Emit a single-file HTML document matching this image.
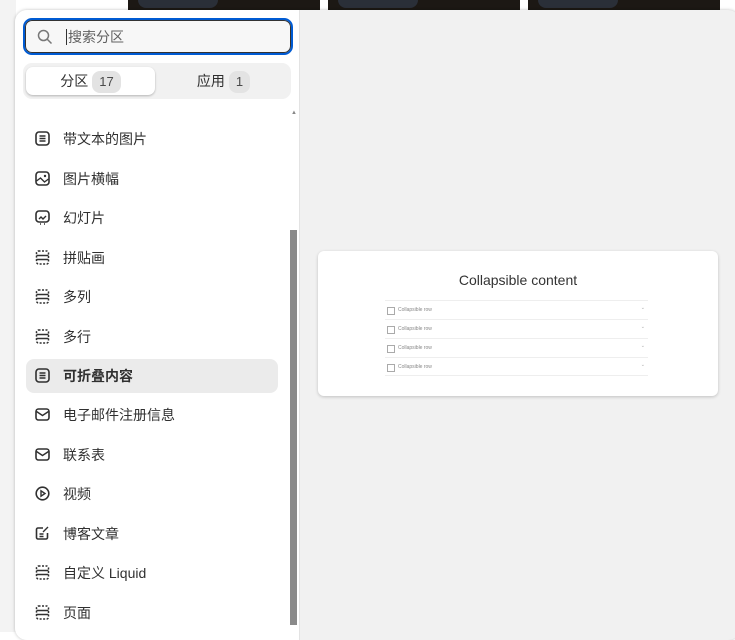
<!DOCTYPE html>
<html><head><meta charset="utf-8"><style>
*{margin:0;padding:0;box-sizing:border-box}
body{width:735px;height:632px;overflow:hidden;background:#fff;font-family:"Liberation Sans","Noto Sans CJK SC",sans-serif;position:relative}
.bgl{position:absolute;left:0;top:0;width:16px;height:632px;background:#f3f3f3}
.img{position:absolute;top:0;height:12px;background:#1c1814}
.img i{position:absolute;left:10px;top:0;width:80px;height:8px;border-radius:0 0 14px 14px;background:#2a2f38}
.pop{position:absolute;left:15px;top:10px;width:725px;height:630px;border-radius:12px;background:#f1f1f1;box-shadow:0 0 3px rgba(0,0,0,.25);overflow:hidden}
.left{position:absolute;left:0;top:0;width:285px;height:100%;background:#fff;border-right:1px solid #e3e3e3}
.search{position:absolute;left:8px;top:8px;width:270px;height:37px;border:2px solid #005bd3;border-radius:9px;background:#f7f7f7;box-shadow:inset 0 0 0 1px #333}
.search span{position:absolute;left:41px;top:9px;font-size:14px;color:#616161;border-left:1px solid #333;padding-left:1px;line-height:16px}
.tabs{position:absolute;left:8px;top:53px;width:268px;height:36px;background:#f1f1f1;border-radius:9px}
.tab{position:absolute;top:4px;height:28px;width:129px;border-radius:7px;font-size:14px;color:#303030;text-align:center;line-height:28px}
.tab b{display:inline-block;font-weight:normal;background:#e3e3e3;border-radius:8px;padding:0 7px;line-height:22px;margin-left:4px;color:#4a4a4a;font-size:13px}
.t1{left:3px;background:#fff;box-shadow:0 1px 2px rgba(0,0,0,.25)}
.t2{left:136px}
.it{position:absolute;left:11px;width:252px;height:34px;border-radius:8px;font-size:14px;color:#303030;line-height:34px;padding-left:37px}
.it svg{position:absolute;left:9px;top:9px}
.sel{background:#ebebeb;font-weight:bold}
.sb{position:absolute;left:275px;top:220px;width:7px;height:395px;background:#8a8a8a}
.card{position:absolute;left:303px;top:241px;width:400px;height:145px;background:#fff;border-radius:6px;box-shadow:0 1px 3px rgba(0,0,0,.2)}
.card h3{font-weight:normal;font-size:14px;color:#333;text-align:center;margin-top:21px}
.row{position:absolute;left:67px;width:263px;height:19px;border-top:1px solid #eee;font-size:5px;color:#888;line-height:19px;padding-left:13px}
.row:before{content:"";position:absolute;left:2px;top:6px;width:6px;height:6px;border:1px solid #aaa}
.row:after{content:"⌄";position:absolute;right:3px;top:-2px;color:#aaa}
</style></head><body>
<div class="bgl"></div>
<div class="img" style="left:128px;width:192px"><i></i></div>
<div class="img" style="left:328px;width:192px"><i></i></div>
<div class="img" style="left:528px;width:192px"><i></i></div>
<div class="pop">
<div class="left">
<div class="search"><svg style="position:absolute;left:12px;top:9px" width="16" height="16" viewBox="0 0 16 16"><circle cx="6.5" cy="6.5" r="5" fill="none" stroke="#777" stroke-width="1.5"/><path d="M10 10l4.5 4.5" stroke="#777" stroke-width="1.5"/></svg><span>搜索分区</span></div>
<div class="tabs"><div class="tab t1">分区<b>17</b></div><div class="tab t2">应用<b>1</b></div></div>
<div style="position:absolute;left:276px;top:100px;font-size:6px;color:#888">▲</div>
<div class="it" style="top:112px"><svg width="15" height="15" viewBox="0 0 15 15"><rect x="1" y="1" width="13" height="13" rx="3" fill="none" stroke="#303030" stroke-width="1.6"/><path d="M4.5 5h6M4.5 7.5h6M4.5 10h6" stroke="#303030" stroke-width="1.4"/></svg>带文本的图片</div>
<div class="it" style="top:152px"><svg width="15" height="15" viewBox="0 0 15 15"><rect x="1" y="1" width="13" height="13" rx="3" fill="none" stroke="#303030" stroke-width="1.6"/><path d="M1.5 10l4-3 4 4 4-3" fill="none" stroke="#303030" stroke-width="1.4"/><circle cx="10" cy="5" r="1.2" fill="#303030"/></svg>图片横幅</div>
<div class="it" style="top:191px"><svg width="15" height="15" viewBox="0 0 15 15"><rect x="1" y="1" width="13" height="11" rx="3" fill="none" stroke="#303030" stroke-width="1.6"/><path d="M4 9l2-2 2 2 3-3M5 14h1M9 14h1" fill="none" stroke="#303030" stroke-width="1.4"/></svg>幻灯片</div>
<div class="it" style="top:231px"><svg width="15" height="15" viewBox="0 0 15 15"><rect x="1.5" y="1" width="12" height="13" rx="2" fill="none" stroke="#303030" stroke-width="1.5" stroke-dasharray="2 1.5"/><path d="M1.5 5.5h12M1.5 9.5h12" stroke="#303030" stroke-width="1.4"/></svg>拼贴画</div>
<div class="it" style="top:270px"><svg width="15" height="15" viewBox="0 0 15 15"><rect x="1.5" y="1" width="12" height="13" rx="2" fill="none" stroke="#303030" stroke-width="1.5" stroke-dasharray="2 1.5"/><path d="M1.5 5.5h12M1.5 9.5h12" stroke="#303030" stroke-width="1.4"/></svg>多列</div>
<div class="it" style="top:310px"><svg width="15" height="15" viewBox="0 0 15 15"><rect x="1.5" y="1" width="12" height="13" rx="2" fill="none" stroke="#303030" stroke-width="1.5" stroke-dasharray="2 1.5"/><path d="M1.5 5.5h12M1.5 9.5h12" stroke="#303030" stroke-width="1.4"/></svg>多行</div>
<div class="it sel" style="top:349px"><svg width="15" height="15" viewBox="0 0 15 15"><rect x="1" y="1" width="13" height="13" rx="3" fill="none" stroke="#303030" stroke-width="1.6"/><path d="M4.5 5h6M4.5 7.5h6M4.5 10h6" stroke="#303030" stroke-width="1.4"/></svg>可折叠内容</div>
<div class="it" style="top:388px"><svg width="15" height="15" viewBox="0 0 15 15"><rect x="1" y="2" width="13" height="11" rx="2.5" fill="none" stroke="#303030" stroke-width="1.6"/><path d="M1.5 4.5l6 4 6-4" fill="none" stroke="#303030" stroke-width="1.4"/></svg>电子邮件注册信息</div>
<div class="it" style="top:428px"><svg width="15" height="15" viewBox="0 0 15 15"><rect x="1" y="2" width="13" height="11" rx="2.5" fill="none" stroke="#303030" stroke-width="1.6"/><path d="M1.5 4.5l6 4 6-4" fill="none" stroke="#303030" stroke-width="1.4"/></svg>联系表</div>
<div class="it" style="top:467px"><svg width="15" height="15" viewBox="0 0 15 15"><circle cx="7.5" cy="7.5" r="6.3" fill="none" stroke="#303030" stroke-width="1.6"/><path d="M6 4.8v5.4l4-2.7z" fill="none" stroke="#303030" stroke-width="1.4"/></svg>视频</div>
<div class="it" style="top:507px"><svg width="15" height="15" viewBox="0 0 15 15"><path d="M8 2H3a1.5 1.5 0 0 0-1.5 1.5v8A1.5 1.5 0 0 0 3 13h8a1.5 1.5 0 0 0 1.5-1.5V7" fill="none" stroke="#303030" stroke-width="1.6"/><path d="M4.5 8h4M4.5 10.5h4M8 6l5-5" stroke="#303030" stroke-width="1.4"/></svg>博客文章</div>
<div class="it" style="top:546px"><svg width="15" height="15" viewBox="0 0 15 15"><rect x="1.5" y="1" width="12" height="13" rx="2" fill="none" stroke="#303030" stroke-width="1.5" stroke-dasharray="2 1.5"/><path d="M1.5 5.5h12M1.5 9.5h12" stroke="#303030" stroke-width="1.4"/></svg>自定义 Liquid</div>
<div class="it" style="top:586px"><svg width="15" height="15" viewBox="0 0 15 15"><rect x="1.5" y="1" width="12" height="13" rx="2" fill="none" stroke="#303030" stroke-width="1.5" stroke-dasharray="2 1.5"/><path d="M1.5 5.5h12M1.5 9.5h12" stroke="#303030" stroke-width="1.4"/></svg>页面</div>
<div class="sb"></div>
</div>
<div class="card"><h3>Collapsible content</h3>
<div class="row" style="top:49px">Collapsible row</div>
<div class="row" style="top:68px">Collapsible row</div>
<div class="row" style="top:87px">Collapsible row</div>
<div class="row" style="top:106px;border-bottom:1px solid #eee">Collapsible row</div>
</div>
</div>
</body></html>
